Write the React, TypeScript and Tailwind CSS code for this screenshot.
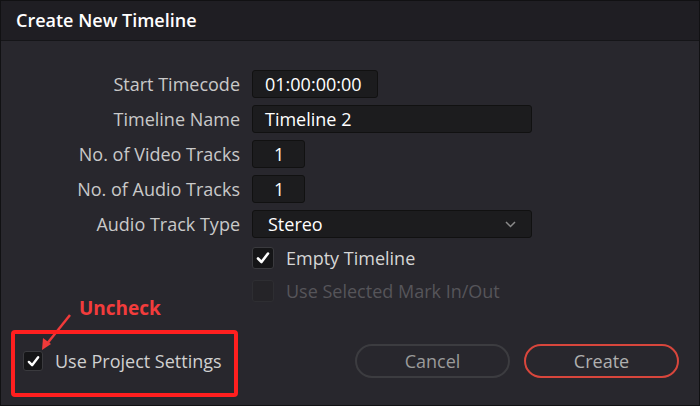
import React from 'react';

const font = { fontFamily: '"Open Sans", "Noto Sans", sans-serif' };

function Check({ size = 14 }: { size?: number }) {
  return (
    <svg width={size} height={size} viewBox="0 0 14 14" fill="none">
      <path d="M2 7.5 L5.5 11 L12 2.5" stroke="#ffffff" strokeWidth="2.6" strokeLinecap="round" strokeLinejoin="round" />
    </svg>
  );
}

function Field({ label, children }: { label: string; children: React.ReactNode }) {
  return (
    <>
      <div className="flex h-[28px] items-center justify-end text-[18px] text-[#c9c9c9]">{label}</div>
      <div className="flex h-[28px] items-center">{children}</div>
    </>
  );
}

export default function App() {
  return (
    <div className="relative w-[700px] h-[406px] overflow-hidden border border-[#111113] bg-[#28272d]" style={font}>
      {/* Title bar */}
      <div className="flex h-[40px] items-center border-b border-[#151518] bg-[#1f1e23] pl-[15px]">
        <span className="text-[18px] font-semibold text-white">Create New Timeline</span>
      </div>

      {/* Form */}
      <div className="grid grid-cols-[239px_1fr] gap-x-3 gap-y-[7px] pt-[29px]">
        <Field label="Start Timecode">
          <div className="flex h-full w-[126px] items-center rounded-[3px] border border-[#111] bg-[#1c1c1e] pl-[12px] text-[18px] text-white">01:00:00:00</div>
        </Field>
        <Field label="Timeline Name">
          <div className="flex h-full w-[280px] items-center rounded-[3px] border border-[#111] bg-[#1c1c1e] pl-[12px] text-[18px] text-white">Timeline 2</div>
        </Field>
        <Field label="No. of Video Tracks">
          <div className="flex h-full w-[53px] items-center rounded-[3px] border border-[#111] bg-[#1c1c1e] pl-[21px] text-[18px] text-white">1</div>
        </Field>
        <Field label="No. of Audio Tracks">
          <div className="flex h-full w-[53px] items-center rounded-[3px] border border-[#111] bg-[#1c1c1e] pl-[21px] text-[18px] text-white">1</div>
        </Field>
        <Field label="Audio Track Type">
          <div className="flex h-full w-[280px] items-center justify-between rounded-[3px] border border-[#111] bg-[#1c1c1e] pl-[15px] pr-[15px] text-[18px] text-white">
            <span>Stereo</span>
            <svg width="11" height="7" viewBox="0 0 11 7" fill="none">
              <path d="M1 1 L5.5 5.5 L10 1" stroke="#8a8a8a" strokeWidth="1.5" />
            </svg>
          </div>
        </Field>
        <div />
        <div className="flex h-[26px] items-center gap-[12px]">
          <div className="flex h-[22px] w-[22px] items-center justify-center rounded-[3px] border border-[#3a3a3e] bg-[#151517]">
            <Check />
          </div>
          <span className="text-[18px] text-[#d6d6d6]">Empty Timeline</span>
        </div>
        <div />
        <div className="flex h-[26px] items-center gap-[12px]">
          <div className="h-[22px] w-[22px] rounded-[3px] border border-[#2e2e32] bg-[#252428]" />
          <span className="text-[18px] text-[#56555a]">Use Selected Mark In/Out</span>
        </div>
      </div>

      {/* Footer */}
      <div className="mt-[40px] flex items-center justify-between pl-[22px] pr-[20px]">
        <div className="flex items-center gap-[12px]">
          <div className="flex h-[20px] w-[20px] items-center justify-center rounded-[3px] border border-[#3a3a3e] bg-[#151517]">
            <Check size={13} />
          </div>
          <span className="text-[18px] text-[#d0d0d0]">Use Project Settings</span>
        </div>
        <div className="flex gap-[14px]">
          <button className="h-[34px] w-[155px] rounded-full border-2 border-[#3c3c40] text-[18px] text-[#9a9a9a]">Cancel</button>
          <button className="h-[34px] w-[155px] rounded-full border-2 border-[#d8463c] text-[18px] text-[#b0b0b0]">Create</button>
        </div>
      </div>

      {/* Annotation overlay */}
      <div className="absolute left-[78px] top-[293px] text-[19px] font-bold text-[#f23c3c]">Uncheck</div>
      <svg className="absolute left-0 top-0" width="700" height="406" viewBox="0 0 700 406" fill="none">
        <path d="M69 314 L45 344" stroke="#f03a3a" strokeWidth="2.5" />
        <path d="M41 349 L42 337 L50 343 Z" fill="#f03a3a" />
      </svg>
      <div className="absolute left-[10px] top-[329px] h-[67px] w-[227px] rounded-[4px] border-[4px] border-[#ff1f1f]" />
    </div>
  );
}
